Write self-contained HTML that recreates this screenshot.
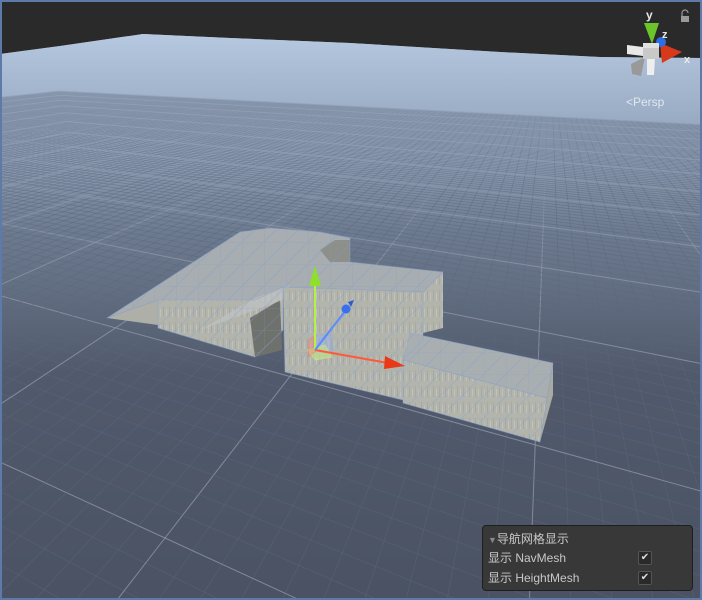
<!DOCTYPE html>
<html><head><meta charset="utf-8">
<style>
html,body{margin:0;padding:0;width:702px;height:600px;overflow:hidden;background:#4b5466;}
#wrap{position:relative;width:702px;height:600px;overflow:hidden;}
svg{position:absolute;left:0;top:0;overflow:hidden;}
.panel{position:absolute;left:482px;top:525px;width:211px;height:66px;background:#383838;border:1px solid #1e1e1e;border-radius:4px;font-family:"Liberation Sans","Noto Sans CJK SC",sans-serif;font-size:12px;line-height:14px;color:#c8c8c8;box-sizing:border-box;overflow:hidden;}
.row{position:absolute;left:5px;white-space:nowrap;}
.cb{position:absolute;left:155px;width:12px;height:12px;background:#2a2a2a;border:1px solid #555;border-radius:2px;color:#ddd;font-size:10px;line-height:12px;text-align:center;}
.persp{position:absolute;left:626px;top:95px;font-family:"Liberation Sans",sans-serif;font-size:12px;line-height:14px;color:#dfe6f0;}
</style></head><body><div id="wrap">
<svg width="702" height="600" viewBox="0 0 702 600">
<defs>
<linearGradient id="sky" x1="0" y1="0" x2="0" y2="1">
<stop offset="0" stop-color="#b6c9e0"/>
<stop offset="0.12" stop-color="#a1b4cc"/>
<stop offset="0.35" stop-color="#6d7b90"/>
<stop offset="0.6" stop-color="#515a6c"/>
<stop offset="1" stop-color="#4a5263"/>
</linearGradient>
<linearGradient id="fade" x1="0" y1="0" x2="0" y2="1">
<stop offset="0" stop-color="#b6c9e0" stop-opacity="0.95"/>
<stop offset="0.1" stop-color="#a1b4cc" stop-opacity="0.6"/>
<stop offset="0.3" stop-color="#8090a8" stop-opacity="0"/>
</linearGradient>
<clipPath id="ground"><path d="M0,54 L60,46 L143,34 L230,38 L350,43 L500,52 L600,57 L702,58 L702,600 L0,600Z"/></clipPath>
<pattern id="tex" width="6" height="16" patternUnits="userSpaceOnUse">
<rect width="6" height="16" fill="#b3b5ad"/>
<rect x="1" y="2" width="1" height="11" fill="#a8aaa2"/>
<rect x="4" y="5" width="1" height="8" fill="#c0c1b8"/>
</pattern>
<pattern id="bgrid" width="22" height="22" patternUnits="userSpaceOnUse">
<path d="M0,0H22M0,0V22M0,22L22,0" stroke="#7f9fd0" stroke-width="1" fill="none" opacity="0.7"/>
</pattern>
</defs>
<rect width="702" height="600" fill="#2a2a2a"/>
<path d="M0,54 L60,46 L143,34 L230,38 L350,43 L500,52 L600,57 L702,58 L702,600 L0,600Z" fill="url(#sky)"/>
<g id="grid" clip-path="url(#ground)" fill="none"></g>
<path d="M0,54 L60,46 L143,34 L230,38 L350,43 L500,52 L600,57 L702,58 L702,600 L0,600Z" fill="url(#fade)"/>
<!-- mesh -->
<g stroke-linejoin="round">
<path d="M107,318 L240,232 L270,228 L320,232 L350,238 L350,262 L443,272 L423,292 L283,287 L255,300 L158,300Z" fill="#a7adb0"/>
<path d="M107,318 L158,300 L158,325Z" fill="#aeb0a8"/>
<path d="M158,300 L255,300 L283,287 L283,330 L255,357 L158,328Z" fill="url(#tex)"/>
<path d="M250,318 L280,300 L282,350 L255,357Z" fill="#6f716c"/>
<path d="M200,330 L255,298 L290,285 L283,300Z" fill="#c0c4c6" opacity="0.6"/>
<path d="M283,287 L423,292 L423,340 L403,360 L403,400 L285,372Z" fill="url(#tex)"/>
<path d="M423,292 L443,272 L443,328 L423,333Z" fill="url(#tex)"/>
<path d="M320,250 L335,240 L350,240 L350,262 L330,262Z" fill="#8d8f8a"/>
<path d="M410,333 L553,363 L547,398 L403,360Z" fill="#a9aeb1"/>
<path d="M403,360 L547,398 L540,442 L403,403Z" fill="url(#tex)"/>
<path d="M547,398 L553,363 L553,395 L540,442Z" fill="#a9aba3"/>
<g opacity="0.45">
<path d="M107,318 L240,232 L270,228 L320,232 L350,238 L350,262 L443,272 L423,292 L283,287 L255,300 L158,300Z M158,300 L255,300 L283,287 L283,330 L255,357 L158,328Z M283,287 L423,292 L423,340 L403,360 L403,400 L285,372Z M410,333 L553,363 L547,398 L403,360Z M403,360 L547,398 L540,442 L403,403Z" fill="url(#bgrid)" stroke="#86a4d4" stroke-width="1"/>
</g>
</g>
<!-- transform gizmo -->
<g>
<path d="M315,335 L332,335 L332,352 L315,352Z" fill="#8fb0ff" opacity="0.35" stroke="#7aa0ff"/>
<path d="M308,350 L325,345 L332,357 L315,360Z" fill="#c8f080" opacity="0.5" stroke="#d6ff6a"/>
<path d="M309,340 L315,335 L315,352 L308,357Z" fill="#ff8070" opacity="0.4" stroke="#ff6a50"/>
<line x1="315" y1="350" x2="315" y2="282" stroke="#b6f04a" stroke-width="2"/>
<path d="M309,286 L315,266 L321,286Z" fill="#8ee02a"/>
<line x1="315" y1="350" x2="388" y2="363" stroke="#ff5a38" stroke-width="2"/>
<path d="M385,356 L405,366 L384,369Z" fill="#e83a18"/>
<line x1="315" y1="350" x2="346" y2="310" stroke="#5a8cff" stroke-width="2"/>
<circle cx="346" cy="309" r="4.5" fill="#3a70f0"/>
<path d="M348,302 L354,300 L351,307Z" fill="#2a5ad0"/>
</g>
<!-- orientation gizmo -->
<g>
<path d="M644,23 L659,23 L652,44Z" fill="#6ac42a"/>
<path d="M660,43 L682,52 L662,63Z" fill="#d63a1a"/>
<circle cx="661" cy="42" r="5" fill="#2c6ee8"/>
<path d="M627,45 L643,47 L643,56 L627,54Z" fill="#e8e8e8"/>
<path d="M631,64 L645,57 L641,76 L632,74Z" fill="#999"/>
<path d="M647,58 L655,58 L654,75 L647,75Z" fill="#eee"/>
<rect x="643" y="43" width="16" height="16" fill="#c9c9c9"/>
<rect x="643" y="43" width="16" height="5" fill="#e0e0e0"/>
<text x="646" y="19" fill="#e8e8e8" font-family="Liberation Sans,sans-serif" font-size="12" font-weight="bold">y</text>
<text x="662" y="38" fill="#e8e8e8" font-family="Liberation Sans,sans-serif" font-size="11" font-weight="bold">z</text>
<text x="684" y="63" fill="#e8e8e8" font-family="Liberation Sans,sans-serif" font-size="11" font-weight="bold">x</text>
<rect x="681" y="16" width="8" height="6" fill="#9a9a9a"/>
<path d="M682,16 V13 A3,3 0 0 1 688,13" stroke="#9a9a9a" fill="none" stroke-width="1.2"/>
</g>
<rect x="1" y="1" width="700" height="598" fill="none" stroke="#5d7aa8" stroke-width="2"/>
</svg>
<div class="persp">&lt;Persp</div>
<div class="panel">
<div class="row" style="top:6px;"><span style="color:#888;font-size:9px;">▼</span>导航网格显示</div>
<div class="row" style="top:25px;">显示 NavMesh</div><div class="cb" style="top:25px;">✔</div>
<div class="row" style="top:45px;">显示 HeightMesh</div><div class="cb" style="top:45px;">✔</div>
</div>
</div>
<script>
(function(){
var g=document.getElementById('grid'),ns='http://www.w3.org/2000/svg';
var VA=[550,40],VB=[-917,40],O=[165,538],a=0.048,b=0.025;
function P(u,v){var w=1+a*u+b*v;return [(a*u*VA[0]+b*v*VB[0]+O[0])/w,(a*u*VA[1]+b*v*VB[1]+O[1])/w,w];}
function seg(pts,major){
 var d='';for(var k=0;k<pts.length;k++){d+=(k?'L':'M')+pts[k][0].toFixed(1)+','+pts[k][1].toFixed(1);}
 var p=document.createElementNS(ns,'path');p.setAttribute('d',d);
 p.setAttribute('stroke',major?'#8c93a3':'#5d677c');p.setAttribute('stroke-width',major?1:0.8);
 p.setAttribute('opacity',major?0.85:0.55);g.appendChild(p);}
var R=120;
for(var i=-R;i<=R;i++){
 var pa=[],pb=[];
 for(var t=-R;t<=R;t+=2){var q=P(i,t);if(q[2]>0.06)pa.push(q);var r=P(t,i);if(r[2]>0.06)pb.push(r);}
 var m=(i%10==0);
 if(pa.length>1)seg(pa,m);if(pb.length>1)seg(pb,m);
}
})();
</script>
</body></html>
